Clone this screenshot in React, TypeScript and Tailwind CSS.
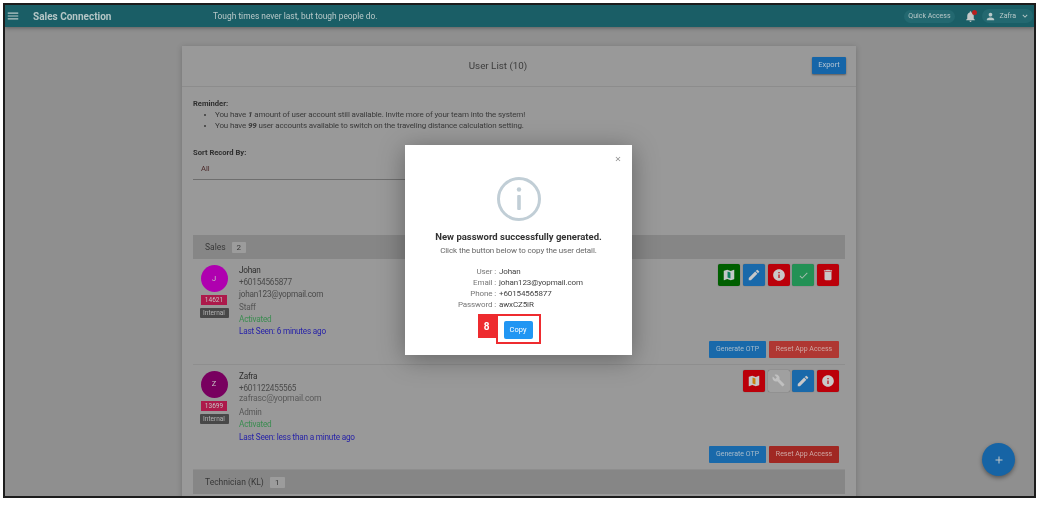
import React from "react";
import { MdMenu, MdNotifications, MdPerson, MdKeyboardArrowDown, MdEdit, MdInfo, MdCheck, MdDelete, MdBuild, MdAdd, MdClose } from "react-icons/md";

function MapIcon({ strip }: { strip: string }) {
  return (
    <svg width="14" height="14" viewBox="0 0 24 24">
      <path d="M20.5 3l-.16.03L15 5.1 9 3 3.36 4.9c-.21.07-.36.25-.36.48V20.5c0 .28.22.5.5.5l.16-.03L9 18.9l6 2.1 5.64-1.9c.21-.07.36-.25.36-.48V3.5c0-.28-.22-.5-.5-.5z" fill="#c4c8c8" />
      <path d="M9.5 6l5 1.75V18l-5-1.75z" fill={strip} />
    </svg>
  );
}

function IconBtn({ bg, children }: { bg: string; children: React.ReactNode }) {
  return <div className={`w-[22px] h-[22px] rounded-[2px] flex items-center justify-center text-[#c8c8c8] shadow-[0_0_1px_rgba(0,0,0,0.5)] ${bg}`}>{children}</div>;
}

function UserRow({ initial, color, code, name, phone, email, emailCls, role, seen, resetBg, icons }: { initial: string; color: string; code: string; name: string; phone: string; email: string; emailCls: string; role: string; seen: string; resetBg: string; icons: React.ReactNode }) {
  return (
    <div className="h-[105.5px] flex border-b border-[#8e8e8e]">
      <div className="w-[42px] flex flex-col items-center pt-[6px] shrink-0">
        <div className={`w-[27px] h-[27px] rounded-full flex items-center justify-center text-[#c8c8c8] text-[7.5px] ${color}`}>{initial}</div>
        <div className="mt-[3px] w-[26px] h-[10px] bg-[#ad1a4b] text-[#c4c4c4] text-[6.5px] leading-[10px] text-center">{code}</div>
        <div className="mt-[3px] w-[29px] h-[10px] bg-[#484848] text-[#b4b4b4] text-[6.5px] leading-[10px] text-center rounded-[1px]">Internal</div>
      </div>
      <div className="flex-1 pt-[5px] pl-[4px] flex flex-col text-[8.2px] tracking-[-0.2px] leading-[12.2px]">
        <div className="text-[#2e2e2e]">{name}</div>
        <div className="text-[#4a4a4a]">{phone}</div>
        <div className={emailCls}>{email}</div>
        <div className="text-[#555555]">{role}</div>
        <div className="text-[#3a8c50]">Activated</div>
        <div className="text-[#231ea8]">{seen}</div>
      </div>
      <div className="flex flex-col items-end justify-between pt-[5px] pb-[6px] pr-[6px]">
        <div className="flex gap-[2.7px]">{icons}</div>
        <div className="flex gap-[3px]">
          <div className="w-[57px] h-[17px] bg-[#1969aa] rounded-[1px] text-[#a9bccb] text-[7px] leading-[17px] text-center">Generate OTP</div>
          <div className={`w-[70px] h-[17px] rounded-[1px] text-[#cfa9a5] text-[7px] leading-[17px] text-center ${resetBg}`}>Reset App Access</div>
        </div>
      </div>
    </div>
  );
}

function Band({ title, count, w }: { title: string; count: string; w: string }) {
  return (
    <div className="h-[24px] bg-[#868686] flex items-center pl-[12px] text-[8.5px] text-[#383838]">
      <span>{title}</span>
      <span className={`ml-[6px] h-[11px] rounded-[1px] bg-[#9c9c9c] text-center leading-[11px] text-[8px] ${w}`}>{count}</span>
    </div>
  );
}

export default function App() {
  return (
    <div className="w-[1041px] h-[507px] bg-white font-['Roboto',sans-serif] pt-[3px] pl-[3px] overflow-hidden blur-[0.3px]">
      <div className="relative w-[1033px] h-[495px] border-2 border-[#1c1c1c] bg-[#8f8f8f] overflow-hidden">
        <header className="h-[22px] bg-[#1a5e66] flex items-center text-[#b9c9c9] shadow-[0_1px_4px_rgba(0,0,0,0.35)] relative">
          <MdMenu className="w-[14px] h-[14px] ml-[1px]" />
          <div className="ml-[13px] text-[10px] font-bold w-[180px] text-[#b4c6c6]">Sales Connection</div>
          <div className="text-[8.4px]">Tough times never last, but tough people do.</div>
          <div className="ml-auto flex items-center">
            <div className="px-[4px] h-[13px] rounded-full bg-[#236870] text-[7px] leading-[13px]">Quick Access</div>
            <div className="relative ml-[9px]">
              <MdNotifications className="w-[13px] h-[13px] text-[#c4c8c8]" />
              <div className="absolute top-0 right-0 w-[5px] h-[5px] rounded-full bg-[#b82020]" />
            </div>
            <div className="ml-[5px] mr-[1px] flex items-center h-[14px] rounded-full bg-[#236870] px-[3px] text-[7px] gap-[3px]">
              <MdPerson className="w-[11px] h-[11px]" />
              <span className="mx-[1px]">Zafra</span>
              <MdKeyboardArrowDown className="w-[10px] h-[10px]" />
            </div>
          </div>
        </header>

        <main className="ml-[177px] mt-[19px] w-[674px] bg-[#999999] shadow-[0_1px_6px_rgba(0,0,0,0.2)] h-[500px]">
          <div className="h-[41px] border-b border-[#8c8c8c] flex items-center relative">
            <div className="w-full pr-[42px] text-center text-[9.8px] text-[#3c3c3c]">User List (10)</div>
            <div className="absolute right-[10px] top-[11px] w-[34px] h-[17px] bg-[#1565a8] rounded-[1px] text-[#b4c4d2] text-[7.5px] leading-[16px] text-center shadow-[0_1px_2px_rgba(0,0,0,0.4)]">Export</div>
          </div>
          <div className="px-[11px] pt-[11px]">
            <div className="text-[7.6px] leading-[11px] font-bold text-[#2e2e2e]">Reminder:</div>
            <ul className="pl-[22px] list-disc text-[8px] tracking-[-0.14px] leading-[11px] text-[#3a3a3a]">
              <li>You have <b><i>1</i></b> amount of user account still available. Invite more of your team into the system!</li>
              <li>You have <b><i>99</i></b> user accounts available to switch on the traveling distance calculation setting.</li>
            </ul>
            <div className="mt-[16px] text-[7.6px] leading-[11px] font-bold text-[#2e2e2e]">Sort Record By:</div>
            <div className="mt-[5px] pl-[8px] pb-[5px] w-[212px] border-b border-[#6e6e6e] text-[7.6px] leading-[11px] text-[#4c2a2a]">All</div>
            <div className="mt-[55px]">
              <Band title="Sales" count="2" w="w-[14px]" />
              <UserRow initial="J" color="bg-[#af00af]" code="14621" name="Johan" phone="+60154565877" email="johan123@yopmail.com" emailCls="text-[#4a4a4a]" role="Staff" seen="Last Seen: 6 minutes ago" resetBg="bg-[#af3732]"
                icons={<>
                  <IconBtn bg="bg-[#005f00]"><MapIcon strip="#108060" /></IconBtn>
                  <IconBtn bg="bg-[#1969aa]"><MdEdit className="w-[14px] h-[14px]" /></IconBtn>
                  <IconBtn bg="bg-[#bb000a]"><MdInfo className="w-[14px] h-[14px]" /></IconBtn>
                  <IconBtn bg="bg-[#239155]"><MdCheck className="w-[11px] h-[11px] opacity-80" /></IconBtn>
                  <IconBtn bg="bg-[#bb000a]"><MdDelete className="w-[14px] h-[14px]" /></IconBtn>
                </>} />
              <UserRow initial="Z" color="bg-[#78005f]" code="13699" name="Zafra" phone="+601122455565" email="zafrasc@yopmail.com" emailCls="text-[#5a5a5a] text-[8.7px] -mt-[1.5px] mb-[1.5px]" role="Admin" seen="Last Seen: less than a minute ago" resetBg="bg-[#a02823]"
                icons={<>
                  <IconBtn bg="bg-[#bb000a]"><MapIcon strip="#c88010" /></IconBtn>
                  <IconBtn bg="bg-[#a0a0a0]"><MdBuild className="w-[13px] h-[13px] text-[#c0c0c0]" /></IconBtn>
                  <IconBtn bg="bg-[#1969aa]"><MdEdit className="w-[14px] h-[14px]" /></IconBtn>
                  <IconBtn bg="bg-[#bb000a]"><MdInfo className="w-[14px] h-[14px]" /></IconBtn>
                </>} />
              <Band title="Technician (KL)" count="1" w="w-[15px]" />
            </div>
          </div>
        </main>

        <div className="absolute right-[19px] bottom-[20px] w-[33px] h-[33px] rounded-full bg-[#1664a5] flex items-center justify-center text-[#c4c8c8] shadow-[0_2px_4px_rgba(0,0,0,0.4)]">
          <MdAdd className="w-[12px] h-[12px]" />
        </div>

        <div className="absolute left-[400px] top-[140px] w-[227px] h-[210px] bg-white shadow-[0_4px_24px_rgba(0,0,0,0.35)] flex flex-col items-center">
          <MdClose className="absolute right-[10px] top-[10px] w-[8px] h-[8px] text-[#888888]" />
          <svg className="mt-[32px]" width="44" height="44" viewBox="0 0 44 44" fill="none">
            <circle cx="22" cy="22" r="20.5" stroke="#c1ced6" strokeWidth="3" />
            <circle cx="22" cy="12.5" r="2.2" fill="#c1ced6" />
            <rect x="20.2" y="18" width="3.6" height="15" rx="1" fill="#c1ced6" />
          </svg>
          <div className="mt-[10px] text-[9.5px] leading-[12px] font-bold text-[#333333]">New password successfully generated.</div>
          <div className="mt-[2px] text-[8px] tracking-[-0.1px] leading-[11px] text-[#666666]">Click the button below to copy the user detail.</div>
          <div className="mt-[10px] grid grid-cols-[68px_auto] w-full text-[8px] tracking-[-0.12px] leading-[11px] text-[#555555] pl-[1px]">
            {[["User", "Johan"], ["Email", "johan123@yopmail.com"], ["Phone", "+60154565877"], ["Password", "awxCZ5iR"]].map(([k, v]) => (
              <React.Fragment key={k}>
                <div className="text-right text-[#777777] w-[90px]">{k}&nbsp;:</div>
                <div className="pl-[25px] text-[#444444]">{v}</div>
              </React.Fragment>
            ))}
          </div>
          <div className="mt-[4px] relative w-[45px] h-[30px] ml-[-1px] pt-[1px] border-2 border-[#ee2b2f] flex items-center justify-center">
            <div className="w-[29px] h-[18px] rounded-[2px] bg-[#2196f3] text-white text-[7.5px] leading-[18px] text-center">Copy</div>
            <div className="absolute left-[-20px] top-[-2px] w-[18px] h-[24px] bg-[#ee2b2f] text-white text-[10px] font-bold flex items-center justify-center">8</div>
          </div>
        </div>
      </div>
    </div>
  );
}
